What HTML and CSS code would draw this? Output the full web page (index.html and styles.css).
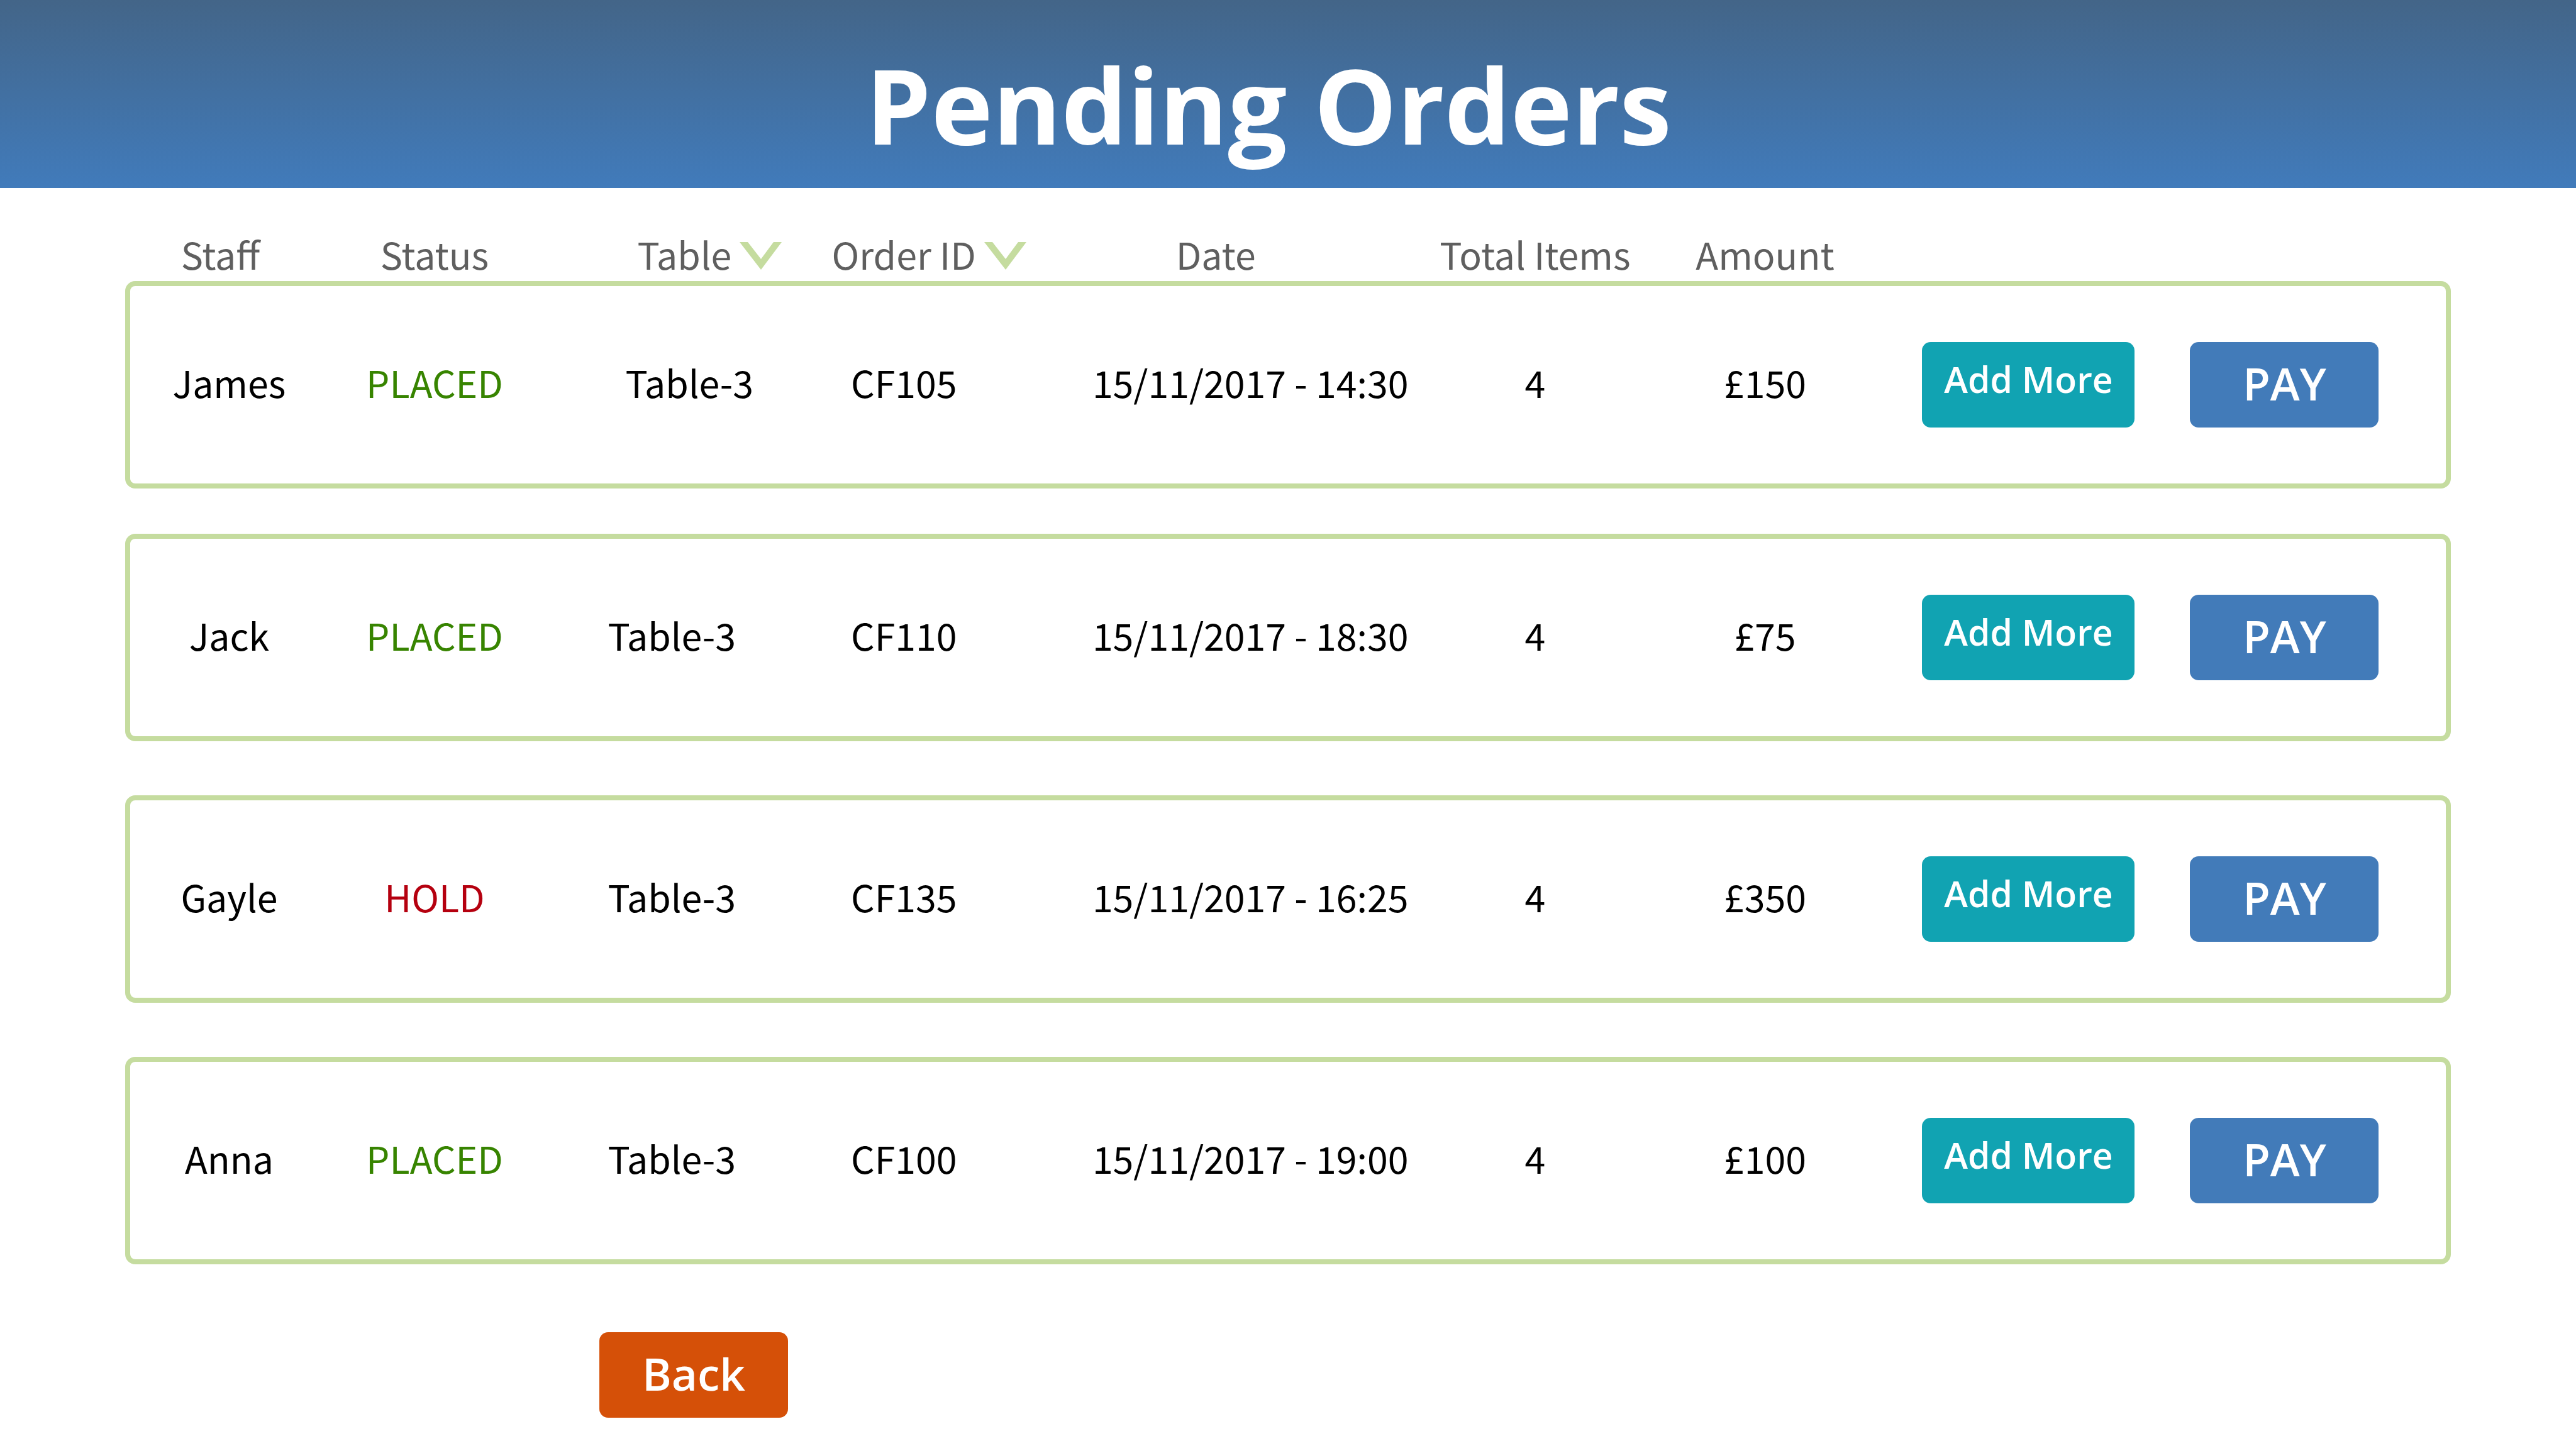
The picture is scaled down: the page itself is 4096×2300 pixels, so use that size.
FILE: index.html
```html
<!DOCTYPE html>
<html lang="en">
<head>
<meta charset="utf-8">
<title>Pending Orders</title>
<link rel="stylesheet" href="styles.css">
</head>
<body>
<header class="banner"><h1 class="banner-title">Pending Orders</h1></header>
<main class="page">
<table class="orders">
<thead class="order-head">
<tr class="head-row">
<th class="head-staff" scope="col">Staff</th>
<th scope="col">Status</th>
<th class="head-table" scope="col"><button class="sort" type="button">Table<svg class="chevron" viewBox="0 0 67 44" aria-hidden="true"><path d="M0 0H13L34 27L54 0H67L34 44Z"/></svg></button></th>
<th class="head-order" scope="col"><button class="sort" type="button">Order ID<svg class="chevron" viewBox="0 0 67 44" aria-hidden="true"><path d="M0 0H13L34 27L54 0H67L34 44Z"/></svg></button></th>
<th class="head-date" scope="col">Date</th>
<th scope="col">Total Items</th>
<th scope="col">Amount</th>
</tr>
</thead>
<tbody class="order-list">
<tr class="order">
<td>James</td><td class="placed">PLACED</td><td class="indent">Table-3</td><td class="order-id">CF105</td><td>15/11/2017 - 14:30</td><td>4</td><td>£150</td>
<td class="actions"><button class="btn add" type="button">Add More</button><button class="btn pay" type="button">PAY</button></td>
</tr>
<tr class="order">
<td>Jack</td><td class="placed">PLACED</td><td>Table-3</td><td class="order-id">CF110</td><td>15/11/2017 - 18:30</td><td>4</td><td>£75</td>
<td class="actions"><button class="btn add" type="button">Add More</button><button class="btn pay" type="button">PAY</button></td>
</tr>
<tr class="order">
<td>Gayle</td><td class="hold">HOLD</td><td>Table-3</td><td class="order-id">CF135</td><td>15/11/2017 - 16:25</td><td>4</td><td>£350</td>
<td class="actions"><button class="btn add" type="button">Add More</button><button class="btn pay" type="button">PAY</button></td>
</tr>
<tr class="order">
<td>Anna</td><td class="placed">PLACED</td><td>Table-3</td><td class="order-id">CF100</td><td>15/11/2017 - 19:00</td><td>4</td><td>£100</td>
<td class="actions"><button class="btn add" type="button">Add More</button><button class="btn pay" type="button">PAY</button></td>
</tr>
</tbody>
</table>
<button class="btn back" type="button">Back</button>
</main>
</body>
</html>
```

FILE: styles.css
```css
* { box-sizing: border-box; }
body { margin: 0; background: #fff; color: #000; font: 59px/80px "Noto Sans CJK SC", "Open Sans", sans-serif; }
.banner { height: 299px; padding-top: 42px; background: linear-gradient(#436588, #417bbb); text-align: center; }
.banner-title { margin: 0; padding-right: 62px; color: #fff; font: bold 166px/248px "Open Sans", sans-serif; }
.page { padding: 65px 199px 0; }
.orders, .order-head { display: block; }
.head-row, .order { display: grid; grid-template-columns: 121fr 130fr 160fr 162fr 223fr 125fr 156fr 338fr; }
.head-row { height: 83px; padding: 0 8px; }
th, td { padding: 0; text-align: center; font-weight: normal; white-space: nowrap; }
th { color: #5f5f5f; }
td { padding-bottom: 9px; }
.head-staff { padding-right: 28px; }
.head-table { padding-left: 120px; }
.head-order { padding-right: 20px; }
.head-date { padding-right: 110px; }
.sort { display: flex; align-items: center; justify-content: center; gap: 13px; width: 100%; padding: 0; border: 0; background: none; color: inherit; font: inherit; }
.chevron { width: 67px; height: 44px; margin-top: 6px; fill: #c5dc9f; }
.order-list { display: grid; gap: 72px; }
.order { height: 330px; align-items: center; border: 8px solid #c5dc9f; border-radius: 16px; }
.order:nth-child(n+3) { margin-top: 14px; }
.placed { color: #378400; }
.hold { color: #b5000f; }
.indent { padding-left: 56px; }
.order-id { padding-right: 100px; }
.actions { display: flex; gap: 88px; padding: 0 0 0 47px; }
.btn { height: 136px; padding: 0 0 4px; border: 0; border-radius: 14px; color: #fff; font: 600 71px/96px "Open Sans", sans-serif; }
.add { width: 338px; padding-bottom: 18px; background: #11a3b2; font-size: 57px; }
.pay { width: 300px; background: #427bb9; }
.back { display: block; width: 300px; margin: 108px 0 0 754px; background: #d55008; }
```
